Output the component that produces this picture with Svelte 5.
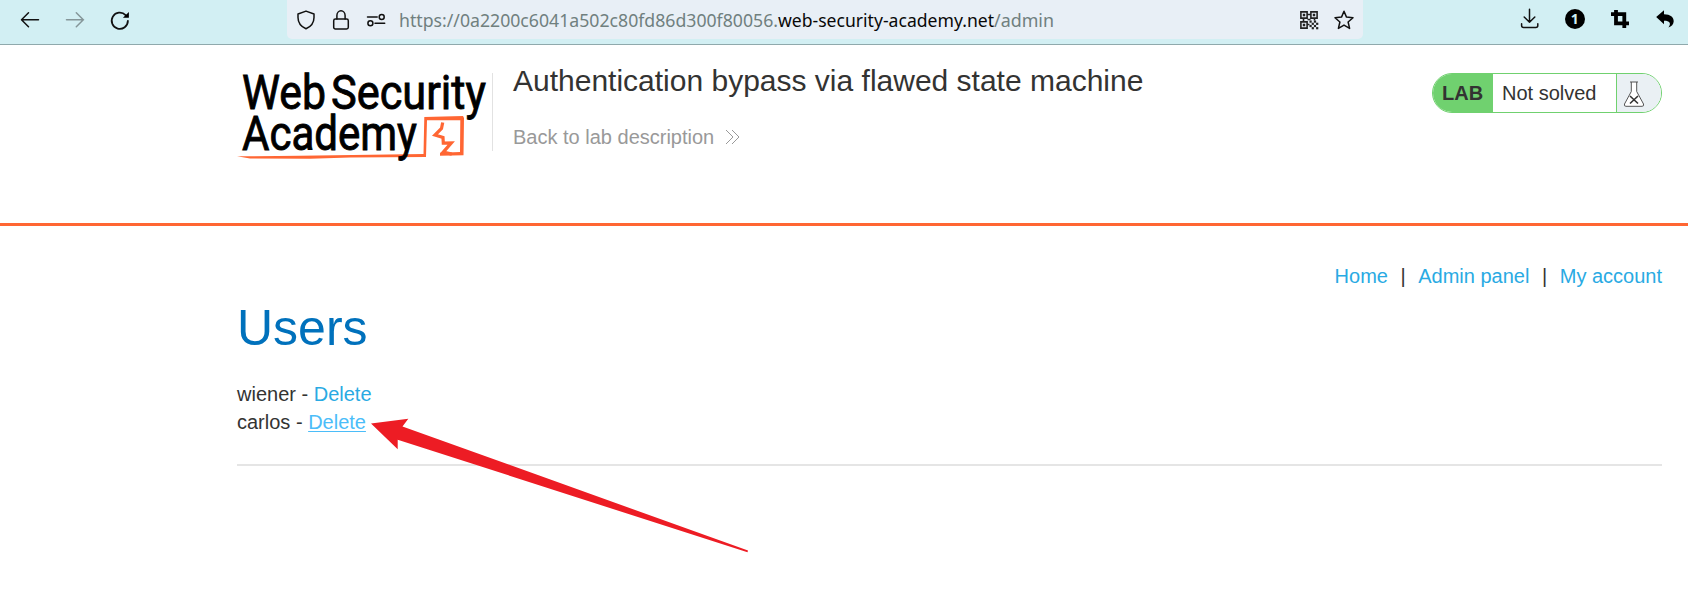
<script>
  const host = { before: 'https://0a2200c6041a502c80fd86d300f80056.', domain: 'web-security-academy.net', path: '/admin' };
  const users = [
    { name: 'wiener', active: false },
    { name: 'carlos', active: true }
  ];
  // Dark modules of the lower-right quarter of the QR glyph
  const modules = [[10.5,10.5],[14.9,10.5],[12.7,12.7],[17.1,12.7],[10.5,14.9],[14.9,14.9],[12.7,17.1],[17.1,17.1]];
</script>

<div class="toolbar">
  <div class="group nav-buttons">
    <svg viewBox="0 0 20 20"><path class="line" d="M18.500 9.800H1.600M8.500 2.800L1.500 9.800l7 7" /></svg>
    <svg viewBox="0 0 20 20" class="muted"><path class="line" d="M1.500 9.800h17M11.300 2.800l7 7-7 7" /></svg>
    <svg viewBox="0 0 20 20"><path class="line thick" d="M17.900 10.800A8.100 8.100 0 1 1 15.600 5.100" /><path d="M18.900 2v5.800h-6z" /></svg>
  </div>
  <div class="urlbar">
    <svg viewBox="0 0 20 20"><path class="line" d="M10 1.100L18 4v3.400c0 5-3.100 9.100-8 11.400C5.100 16.500 2 12.400 2 7.400V4z" /></svg>
    <svg viewBox="0 0 20 20"><path class="line" d="M5.900 9V5.500a4.100 4.700 0 0 1 8.200 0V9" /><rect class="line" x="2.700" y="9" width="14.600" height="10" rx="1.700" /></svg>
    <svg viewBox="0 0 20 20"><path class="line" d="M1.500 7h9.700M9 13.200h9.700" /><circle class="line" cx="15.700" cy="7" r="2.500" /><circle class="line" cx="4.400" cy="13.200" r="2.500" /></svg>
    <svg class="url" viewBox="0 0 660 26">
      <text x="0" y="19.500" textLength="379" lengthAdjust="spacingAndGlyphs">{host.before}</text>
      <text class="domain" x="379" y="19.500" textLength="216" lengthAdjust="spacingAndGlyphs">{host.domain}</text>
      <text x="595" y="19.500" textLength="60" lengthAdjust="spacingAndGlyphs">{host.path}</text>
    </svg>
    <svg viewBox="0 0 20 20" class="qr">
      <path class="frame" d="M1.900 1.900h6.200v6.200H1.900zM11.900 1.900h6.200v6.200h-6.200zM1.900 11.900h6.200v6.200H1.900zM8.500 4.500h3M4.500 8.500v3M15.500 8.500v2M8.500 14.500h2M8.500 9.500h3" />
      <path d="M3.800 3.800h2.400v2.400H3.800zM13.800 3.800h2.400v2.400h-2.400zM3.800 13.800h2.400v2.400H3.800z" />
      {#each modules as [x, y]}<rect {x} {y} width="2.200" height="2.200" />{/each}
    </svg>
    <svg viewBox="0 0 20 20"><path class="line" d="M10 1.300l2.500 5.800 6.500.6-4.900 4.300 1.500 6.400-5.600-3.300-5.600 3.300 1.500-6.400L1 7.700l6.500-.6z" /></svg>
  </div>
  <div class="group extensions">
    <svg viewBox="0 0 20 20"><path class="line" d="M9.500.3v13M4.200 8l5.300 5.300L14.800 8M1.600 14.700v1.800q0 2 2 2h12.200q2 0 2-2v-1.800" /></svg>
    <svg viewBox="0 0 20 20"><circle cx="10" cy="10" r="10" /><text class="count" x="9.800" y="15" text-anchor="middle">1</text></svg>
    <svg viewBox="0 0 20 20"><path class="crop" d="M1 5.200h13.300V19M6 1v13.300h13" /></svg>
    <svg viewBox="0 0 20 20"><path d="M1.200 8L9 1.300v4c6.500 0 9.700 3 9.700 7 0 3-2.200 5.300-5.300 6.200 3.300-4.200 1-6.900-4.400-6.800v3.500z" /></svg>
  </div>
</div>

<header>
  <svg class="logo" viewBox="237 70 252 92">
    <text x="242" y="109.300" textLength="84" lengthAdjust="spacingAndGlyphs">Web</text>
    <text x="331" y="109.300" textLength="155" lengthAdjust="spacingAndGlyphs">Security</text>
    <path class="ember" d="M237 156.300L300 155.800 423.500 154 424.300 117 463 116 464 118 463.500 155.200 440 155.800 440 152.800 460 152 460.300 120.300 427 120.300 426 156.900 350 157.500 310 158.800 250 158.500z" />
    <path class="bolt" d="M442.700 122.500l-1.200 6-6.500 6.500 8 2.500.3 5.700 8-.3-8 9.200 8.500 2" />
    <text x="242" y="149.800" textLength="175" lengthAdjust="spacingAndGlyphs">Academy</text>
  </svg>
  <div class="title">
    <h2>Authentication bypass via flawed state machine</h2>
    <a class="back" href="#lab">Back to lab description
      <svg viewBox="0 0 15 16"><path d="M1 1l7 7-7 7M7 1l7 7-7 7" /></svg>
    </a>
  </div>
  <div class="status">
    <strong>LAB</strong>
    <span>Not solved</span>
    <i><svg viewBox="0 0 22 28"><path class="glass" d="M7 2h8M8.300 2v9.500L1.500 24q-.8 2.300 1.500 2.300h16q2.300 0 1.500-2.300L13.700 11.500V2" /><path class="cross" d="M7 16l8 7.500M15 16l-8 7.500" /></svg></i>
  </div>
</header>

<main>
  <nav><a href="#home">Home</a><span>|</span><a href="#admin">Admin panel</a><span>|</span><a href="#account">My account</a></nav>
  <h1>Users</h1>
  {#each users as user}
    <div class="user">{user.name} - <a href="#delete" class:active={user.active}>Delete</a></div>
  {/each}
  <hr />
</main>

<svg class="arrow" viewBox="0 0 380 136"><path d="M0 5.400L37.300 .7 31.500 8.500 377 132.500 376.500 134.300 26.700 21.700V31.200z" /></svg>

<style>
  :global(body) {
    background: #fff;
    color: #333332;
    font: 20px/28px 'Liberation Sans', Arial, sans-serif;
    overflow: hidden;
  }
  a { color: #29aae3; text-decoration: none; }
  svg { display: block; flex: none; overflow: visible; }
  .toolbar {
    display: flex;
    height: 44px;
    background: #d2eff3;
    border-bottom: 1px solid #8fa9ac;
  }
  .toolbar svg { width: 20px; height: 20px; }
  .group { display: flex; align-items: center; gap: 25px; height: 39px; }
  .nav-buttons { padding-left: 20px; padding-right: 157px; }
  .extensions { margin-left: auto; padding-right: 13px; height: 38px; }
  .muted { opacity: .4; }
  .line { fill: none; stroke: #111; stroke-width: 1.500; stroke-linejoin: round; stroke-linecap: round; }
  .thick { stroke-width: 1.800; }
  .urlbar {
    display: flex;
    align-items: center;
    gap: 15px;
    box-sizing: border-box;
    width: 1076px;
    height: 39px;
    padding: 0 9px;
    background: #e8eff6;
    border-radius: 0 0 5px 5px;
  }
  .toolbar .url { width: 660px; height: 26px; margin-left: -2px; }
  .url text { font: 18px 'Noto Sans', sans-serif; fill: #70807f; }
  .url .domain { fill: #080808; }
  .qr { margin-left: auto; fill: #222; }
  .frame { fill: none; stroke: #222; stroke-width: 1.600; }
  .count { font: bold 14px 'Noto Sans', sans-serif; fill: #d2eff3; }
  .crop { fill: none; stroke: #000; stroke-width: 3.800; }

  header {
    display: flex;
    align-items: flex-start;
    box-sizing: border-box;
    height: 181px;
    padding: 25px 26px 0 237px;
    border-bottom: 3px solid #ff6633;
  }
  .logo { width: 252px; height: 92px; }
  .logo text { font: 400 48px Roboto, sans-serif; fill: #000; stroke: #000; stroke-width: .9; }
  .ember { fill: #ff6633; }
  .bolt { fill: none; stroke: #ff6633; stroke-width: 3.200; }
  .title {
    height: 78px;
    margin: 3px 0 0 3px;
    padding-left: 20px;
    border-left: 1px solid #e2e2e2;
  }
  h2 { margin: -10px 0 0; font-size: 30px; line-height: 36px; font-weight: 400; }
  .back { display: flex; align-items: center; gap: 11px; margin-top: 24px; color: #999; }
  .back svg { width: 15px; height: 16px; }
  .back path { fill: none; stroke: #999; stroke-width: 1; }
  .status {
    display: flex;
    box-sizing: border-box;
    width: 230px;
    height: 40px;
    margin: 3px 0 0 auto;
    border: 1px solid #70d16f;
    border-radius: 20px;
    overflow: hidden;
    line-height: 38px;
  }
  .status strong { width: 51px; padding-left: 9px; background: #70d16f; }
  .status span { width: 114px; padding-left: 9px; }
  .status i { flex: 1; padding: 6px 0 0 6px; background: #eaf0f4; border-left: 1px solid #70d16f; }
  .status svg { width: 22px; height: 28px; }
  .glass { fill: #fff; stroke: #555; stroke-width: 1; }
  .cross { fill: none; stroke: #333; stroke-width: 1.600; }

  main { padding: 36px 26px 0 237px; }
  nav { display: flex; justify-content: flex-end; }
  nav span { width: 30.300px; text-align: center; }
  h1 { margin: 8px 0 22px; color: #0071bc; font-size: 50px; line-height: 60px; font-weight: 400; }
  .user { height: 28px; }
  .active { color: #4bbdf9; text-decoration: underline; text-decoration-thickness: 1px; text-underline-offset: 2px; }
  hr { height: 2px; margin: 28px 0 0; border: 0; background: #e5e5e5; }

  .arrow { position: absolute; left: 371px; top: 418px; width: 380px; height: 136px; fill: #ed1c24; }
</style>
